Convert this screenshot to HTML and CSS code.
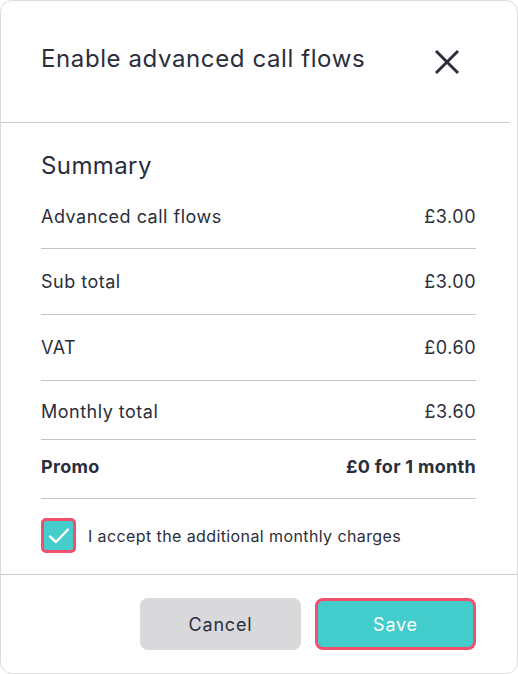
FILE: index.html
```html
<!DOCTYPE html>
<html lang="en">
	<head>
		<meta charset="utf-8">
		<meta name="viewport" content="width=device-width, initial-scale=1.0">
		<title>Enable advanced call flows</title>
		<link rel="stylesheet" href="styles.css">
	</head>
	<body>
		<div class="modal">
			<div class="modal-header">
				<h1 class="modal-title">Enable advanced call flows</h1>
				<button class="close-btn" aria-label="Close">
					<svg width="26" height="26" viewBox="0 0 26 26">
						<path d="M2 2 L24 24 M24 2 L2 24" stroke="#2b2e3c" stroke-width="3" fill="none"/>
					</svg>
				</button>
			</div>
			<div class="modal-body">
				<h2 class="summary-title">Summary</h2>
				<div class="row first"><span>Advanced call flows</span><span>£3.00</span></div>
				<div class="row"><span>Sub total</span><span>£3.00</span></div>
				<div class="row"><span>VAT</span><span>£0.60</span></div>
				<div class="row short low"><span>Monthly total</span><span>£3.60</span></div>
				<div class="row short bold"><span>Promo</span><span>£0 for 1 month</span></div>
				<label class="accept">
					<span class="checkbox">
						<svg width="22" height="18" viewBox="0 0 22 18">
							<path d="M2 9.5 L8 15 L20 2.5" stroke="#fff" stroke-width="2.4" fill="none" stroke-linecap="round" stroke-linejoin="round"/>
						</svg>
					</span>
					I accept the additional monthly charges
				</label>
			</div>
			<div class="modal-footer">
				<button class="btn btn-cancel">Cancel</button>
				<button class="btn btn-save">Save</button>
			</div>
		</div>
	</body>
</html>
```
FILE: styles.css
```css
* {
	box-sizing: border-box;
}
body {
	margin: 0;
	background-color: #ffffff;
	font-family: 'Inter', 'Noto Sans', sans-serif;
	color: #2b2e3c;
}
.modal {
	width: 518px;
	height: 674px;
	border: 1px solid #dcdcdf;
	border-radius: 12px;
	display: flex;
	flex-direction: column;
	overflow: hidden;
}
.modal-header {
	height: 122px;
	flex-shrink: 0;
	display: flex;
	align-items: flex-start;
	justify-content: space-between;
	padding: 43px 49px 0 40px;
	border-bottom: 1px solid #c9c9cd;
	margin-right: 8px;
}
.modal-title {
	margin: 0;
	font-size: 24px;
	font-weight: 400;
	line-height: 30px;
	letter-spacing: 0.6px;
}
.close-btn {
	border: none;
	background: none;
	padding: 0;
	margin-top: 5px;
	width: 26px;
	height: 26px;
}
.modal-body {
	flex: 1;
	padding: 28px 41px 0 40px;
}
.summary-title {
	margin: 0 0 8px 0;
	font-size: 24px;
	font-weight: 400;
	line-height: 30px;
	letter-spacing: 0.4px;
}
.row {
	display: flex;
	justify-content: space-between;
	align-items: center;
	height: 66px;
	border-bottom: 1px solid #c4c4c8;
	font-size: 18px;
	letter-spacing: 0.5px;
}
.row.first {
	height: 60px;
	padding-bottom: 4px;
}
.row.short {
	height: 59px;
}
.row.low {
	padding-top: 3px;
}
.row.bold {
	font-weight: 700;
	letter-spacing: 0.3px;
	padding-bottom: 5px;
}
.accept {
	display: flex;
	align-items: center;
	gap: 12px;
	margin-top: 19px;
	font-size: 16px;
	letter-spacing: 0.4px;
}
.checkbox {
	width: 35px;
	height: 35px;
	border: 3px solid #f0506e;
	border-radius: 5px;
	background-color: #45cdcb;
	display: flex;
	align-items: center;
	justify-content: center;
}
.modal-footer {
	height: 99px;
	flex-shrink: 0;
	border-top: 1px solid #c9c9cd;
	display: flex;
	justify-content: flex-end;
	align-items: flex-start;
	gap: 14px;
	padding: 23px 41px 0 0;
}
.btn {
	width: 161px;
	height: 52px;
	border-radius: 8px;
	font-family: inherit;
	font-size: 18px;
	letter-spacing: 0.8px;
	border: none;
}
.btn-cancel {
	background-color: #d9d9dc;
	color: #2b2e3c;
}
.btn-save {
	background-color: #42cdcc;
	color: #ffffff;
	border: 3px solid #f0506e;
}
```
